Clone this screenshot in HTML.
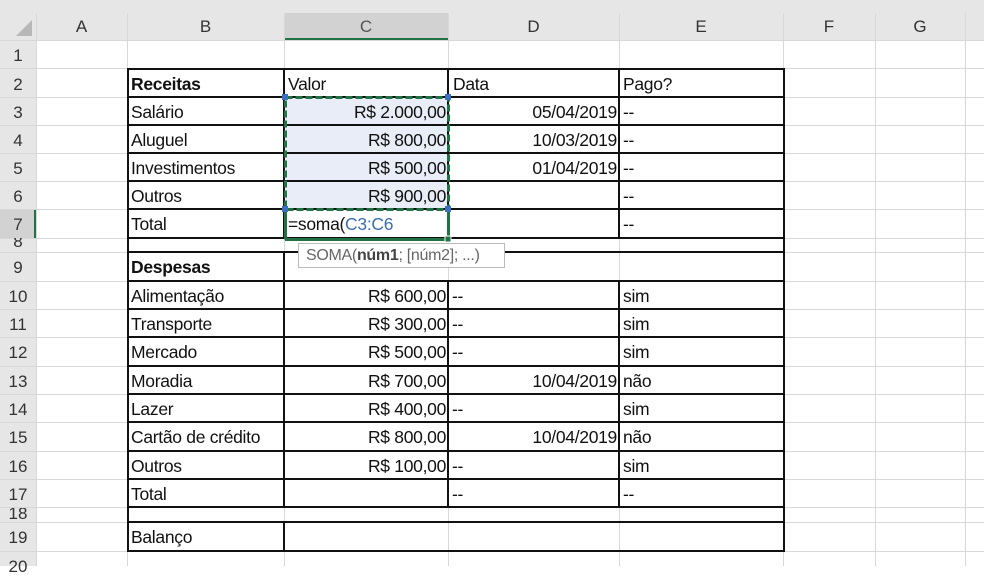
<!DOCTYPE html>
<html><head><meta charset="utf-8"><style>
*{margin:0;padding:0;box-sizing:border-box}
body{width:984px;height:566px;overflow:hidden;background:#fff;position:relative;font-family:"Liberation Sans",sans-serif;}
.a{position:absolute}
.v{position:absolute;width:1px;background:#d8d8d8;top:13px;height:553px}
.h{position:absolute;height:1px;background:#d8d8d8;left:0;width:984px}
.bv{position:absolute;width:2px;background:#111}
.bh{position:absolute;height:2px;background:#111}
.t{position:absolute;font-size:17.5px;color:#111;height:28px;line-height:31px;white-space:nowrap;letter-spacing:-0.3px}
.r{text-align:right}
.rh{position:absolute;left:0;width:36px;text-align:center;font-size:17px;color:#333;height:28px;line-height:31px}
.ch{position:absolute;top:13px;height:27px;line-height:27px;text-align:center;font-size:17px;color:#333}
</style></head><body>
<div class="a" style="left:0;top:0;width:984px;height:40px;background:#e6e6e6"></div>
<div class="a" style="left:0;top:40px;width:36px;height:526px;background:#e6e6e6"></div>
<div class="a" style="left:284px;top:13px;width:164px;height:27px;background:#d2d2d2;border-bottom:2px solid #217346"></div>
<div class="a" style="left:0;top:209px;width:36px;height:29px;background:#d2d2d2;border-right:2px solid #217346"></div>
<div class="a" style="left:16px;top:20px;width:0;height:0;border-left:16px solid transparent;border-bottom:16px solid #b8b8b8"></div>
<div class="a" style="left:285px;top:98px;width:163px;height:111px;background:#e9edf8"></div>
<div class="v" style="left:36px"></div><div class="v" style="left:127px"></div><div class="v" style="left:284px"></div><div class="v" style="left:448px"></div><div class="v" style="left:619px"></div><div class="v" style="left:783px"></div><div class="v" style="left:875px"></div><div class="v" style="left:965px"></div>
<div class="h" style="top:40px"></div><div class="h" style="top:68px"></div><div class="h" style="top:97px"></div><div class="h" style="top:125px"></div><div class="h" style="top:153px"></div><div class="h" style="top:181px"></div><div class="h" style="top:209px"></div><div class="h" style="top:238px"></div><div class="h" style="top:252px"></div><div class="h" style="top:281px"></div><div class="h" style="top:309px"></div><div class="h" style="top:337px"></div><div class="h" style="top:366px"></div><div class="h" style="top:394px"></div><div class="h" style="top:422px"></div><div class="h" style="top:451px"></div><div class="h" style="top:479px"></div><div class="h" style="top:507px"></div><div class="h" style="top:522px"></div><div class="h" style="top:551px"></div>
<div class="ch" style="left:36px;width:91px">A</div><div class="ch" style="left:127px;width:157px">B</div><div class="ch" style="left:284px;width:164px;color:#555">C</div><div class="ch" style="left:448px;width:171px">D</div><div class="ch" style="left:619px;width:164px">E</div><div class="ch" style="left:783px;width:92px">F</div><div class="ch" style="left:875px;width:90px">G</div>
<div class="rh" style="top:40px">1</div><div class="rh" style="top:69px">2</div><div class="rh" style="top:97px">3</div><div class="rh" style="top:125px">4</div><div class="rh" style="top:153px">5</div><div class="rh" style="top:181px">6</div><div class="rh" style="top:209px">7</div><div class="rh" style="top:238px;height:14px;overflow:hidden"><span style="position:relative;top:-12px">8</span></div><div class="rh" style="top:252px">9</div><div class="rh" style="top:281px">10</div><div class="rh" style="top:309px">11</div><div class="rh" style="top:337px">12</div><div class="rh" style="top:366px">13</div><div class="rh" style="top:394px">14</div><div class="rh" style="top:422px">15</div><div class="rh" style="top:451px">16</div><div class="rh" style="top:479px">17</div><div class="rh" style="top:508px;height:14px;overflow:hidden"><span style="position:relative;top:-10px">18</span></div><div class="rh" style="top:522px">19</div><div class="rh" style="top:551px">20</div>
<div class="bh" style="left:127px;width:658px;top:68px"></div><div class="bh" style="left:127px;width:658px;top:96px"></div><div class="bh" style="left:127px;width:658px;top:124px"></div><div class="bh" style="left:127px;width:658px;top:152px"></div><div class="bh" style="left:127px;width:658px;top:180px"></div><div class="bh" style="left:127px;width:658px;top:208px"></div><div class="bh" style="left:127px;width:658px;top:237px"></div><div class="bh" style="left:127px;width:658px;top:251px"></div><div class="bh" style="left:127px;width:658px;top:280px"></div><div class="bh" style="left:127px;width:658px;top:308px"></div><div class="bh" style="left:127px;width:658px;top:336px"></div><div class="bh" style="left:127px;width:658px;top:365px"></div><div class="bh" style="left:127px;width:658px;top:393px"></div><div class="bh" style="left:127px;width:658px;top:421px"></div><div class="bh" style="left:127px;width:658px;top:450px"></div><div class="bh" style="left:127px;width:658px;top:478px"></div><div class="bh" style="left:127px;width:658px;top:506px"></div><div class="bh" style="left:127px;width:658px;top:521px"></div><div class="bh" style="left:127px;width:658px;top:550px"></div>
<div class="bv" style="left:127px;top:68px;height:484px"></div><div class="bv" style="left:783px;top:68px;height:484px"></div>
<div class="bv" style="left:283px;top:68px;height:171px"></div><div class="bv" style="left:283px;top:251px;height:257px"></div><div class="bv" style="left:283px;top:521px;height:31px"></div>
<div class="bv" style="left:447px;top:68px;height:171px"></div><div class="bv" style="left:447px;top:280px;height:228px"></div>
<div class="bv" style="left:618px;top:68px;height:171px"></div><div class="bv" style="left:618px;top:280px;height:228px"></div>
<div class="t" style="left:131px;top:69px;font-weight:bold">Receitas</div>
<div class="t" style="left:131px;top:97px">Salário</div>
<div class="t" style="left:131px;top:125px">Aluguel</div>
<div class="t" style="left:131px;top:153px">Investimentos</div>
<div class="t" style="left:131px;top:181px">Outros</div>
<div class="t" style="left:131px;top:209px">Total</div>
<div class="t" style="left:131px;top:252px;font-weight:bold">Despesas</div>
<div class="t" style="left:131px;top:281px">Alimentação</div>
<div class="t" style="left:131px;top:309px">Transporte</div>
<div class="t" style="left:131px;top:337px">Mercado</div>
<div class="t" style="left:131px;top:366px">Moradia</div>
<div class="t" style="left:131px;top:394px">Lazer</div>
<div class="t" style="left:131px;top:422px">Cartão de crédito</div>
<div class="t" style="left:131px;top:451px">Outros</div>
<div class="t" style="left:131px;top:479px">Total</div>
<div class="t" style="left:131px;top:522px">Balanço</div>
<div class="t" style="left:288px;top:69px">Valor</div>
<div class="t r" style="left:284px;width:162px;top:97px">R$ 2.000,00</div>
<div class="t r" style="left:284px;width:162px;top:125px">R$ 800,00</div>
<div class="t r" style="left:284px;width:162px;top:153px">R$ 500,00</div>
<div class="t r" style="left:284px;width:162px;top:181px">R$ 900,00</div>
<div class="t" style="left:288px;top:209px">=soma(<span style="color:#3c6db5">C3:C6</span></div>
<div class="t r" style="left:284px;width:162px;top:281px">R$ 600,00</div>
<div class="t r" style="left:284px;width:162px;top:309px">R$ 300,00</div>
<div class="t r" style="left:284px;width:162px;top:337px">R$ 500,00</div>
<div class="t r" style="left:284px;width:162px;top:366px">R$ 700,00</div>
<div class="t r" style="left:284px;width:162px;top:394px">R$ 400,00</div>
<div class="t r" style="left:284px;width:162px;top:422px">R$ 800,00</div>
<div class="t r" style="left:284px;width:162px;top:451px">R$ 100,00</div>
<div class="t" style="left:453px;top:69px">Data</div>
<div class="t r" style="left:449px;width:168px;top:97px">05/04/2019</div>
<div class="t r" style="left:449px;width:168px;top:125px">10/03/2019</div>
<div class="t r" style="left:449px;width:168px;top:153px">01/04/2019</div>
<div class="t" style="left:452px;top:281px">--</div><div class="t" style="left:452px;top:309px">--</div><div class="t" style="left:452px;top:337px">--</div>
<div class="t r" style="left:449px;width:168px;top:366px">10/04/2019</div>
<div class="t" style="left:452px;top:394px">--</div>
<div class="t r" style="left:449px;width:168px;top:422px">10/04/2019</div>
<div class="t" style="left:452px;top:451px">--</div><div class="t" style="left:452px;top:479px">--</div>
<div class="t" style="left:623px;top:69px">Pago?</div>
<div class="t" style="left:623px;top:97px">--</div><div class="t" style="left:623px;top:125px">--</div><div class="t" style="left:623px;top:153px">--</div><div class="t" style="left:623px;top:181px">--</div><div class="t" style="left:623px;top:209px">--</div>
<div class="t" style="left:623px;top:281px">sim</div><div class="t" style="left:623px;top:309px">sim</div><div class="t" style="left:623px;top:337px">sim</div><div class="t" style="left:623px;top:366px">não</div><div class="t" style="left:623px;top:394px">sim</div><div class="t" style="left:623px;top:422px">não</div><div class="t" style="left:623px;top:451px">sim</div><div class="t" style="left:623px;top:479px">--</div>
<svg class="a" style="left:0;top:0" width="984" height="566">
<path d="M285.5 239.5 V210 M448.5 210 V239.5 M285 239.5 H449" stroke="#217346" stroke-width="3" fill="none"/>
<rect x="285.5" y="97.5" width="163" height="112" fill="none" stroke="#217346" stroke-width="3" stroke-dasharray="7 3"/>
<rect x="282" y="94" width="6" height="6" fill="#3b6fc4"/><rect x="445" y="94" width="6" height="6" fill="#3b6fc4"/>
<rect x="282" y="206" width="6" height="6" fill="#3b6fc4"/><rect x="445" y="206" width="6" height="6" fill="#3b6fc4"/>
<rect x="445" y="236" width="6" height="6" fill="#217346" stroke="#fff" stroke-width="1"/>
</svg>
<div class="a" style="left:298px;top:243px;width:207px;height:25px;background:#fff;border:1px solid #bbb;font-size:16px;line-height:23px;color:#666;padding-left:7px;white-space:nowrap;letter-spacing:-0.3px">SOMA(<b style="color:#444">núm1</b>; [núm2]; ...)</div>
</body></html>
